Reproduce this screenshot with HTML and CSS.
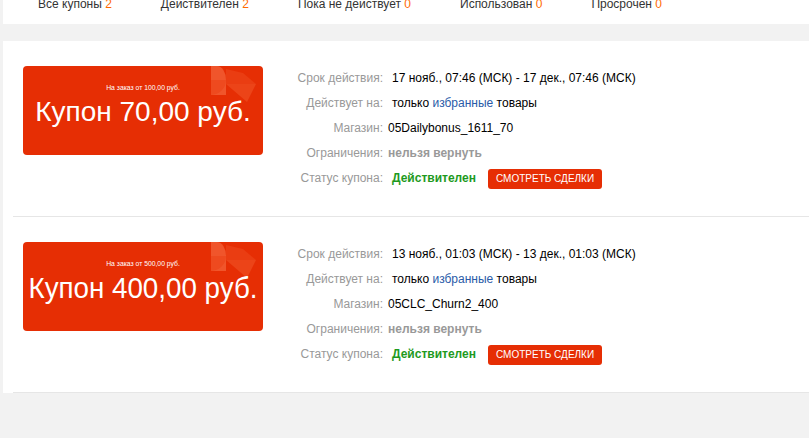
FILE: index.html
```html
<!DOCTYPE html>
<html lang="ru">
<head>
    <meta charset="UTF-8">
    <meta name="viewport" content="width=device-width, initial-scale=1.0">
    <title>Мои купоны</title>
    <link rel="stylesheet" href="styles.css">
</head>
<body>
    <div class="tabs">
        <a class="tab">Все купоны <span class="count">2</span></a>
        <a class="tab">Действителен <span class="count">2</span></a>
        <a class="tab">Пока не действует <span class="count">0</span></a>
        <a class="tab">Использован <span class="count">0</span></a>
        <a class="tab">Просрочен <span class="count">0</span></a>
    </div>

    <div class="coupon-list">
        <div class="coupon-item">
            <div class="coupon-card">
                <svg class="coupon-deco" width="50" height="44" viewBox="0 0 50 44">
                    <path d="M0 0 H6 A9 14 0 0 1 15 14 V29 H0 Z" fill="#f0552b"/>
                    <path d="M0 14 H15 A15 15 0 0 1 0 29 Z" fill="#ee4a1f"/>
                    <path d="M15 3 L32 7 L45 18 L15 18 Z" fill="#ea3d12"/>
                    <path d="M15 18 H45 L36 36 Z" fill="#ec4418"/>
                </svg>
                <div class="coupon-min">На заказ от 100,00 руб.</div>
                <div class="coupon-amount">Купон 70,00 руб.</div>
            </div>
            <div class="coupon-info">
                <span class="label">Срок действия:</span>
                <span class="value spaced">17 нояб., 07:46 (МСК) - 17 дек., 07:46 (МСК)</span>
                <span class="label">Действует на:</span>
                <span class="value spaced">только <a class="link">избранные</a> товары</span>
                <span class="label">Магазин:</span>
                <span class="value">05Dailybonus_1611_70</span>
                <span class="label">Ограничения:</span>
                <span class="value muted">нельзя вернуть</span>
                <span class="label">Статус купона:</span>
                <span class="value spaced"><b class="status">Действителен</b><button class="deals-btn">СМОТРЕТЬ СДЕЛКИ</button></span>
            </div>
        </div>

        <div class="coupon-item">
            <div class="coupon-card">
                <svg class="coupon-deco" width="50" height="44" viewBox="0 0 50 44">
                    <path d="M0 0 H6 A9 14 0 0 1 15 14 V29 H0 Z" fill="#f0552b"/>
                    <path d="M0 14 H15 A15 15 0 0 1 0 29 Z" fill="#ee4a1f"/>
                    <path d="M15 3 L32 7 L45 18 L15 18 Z" fill="#ea3d12"/>
                    <path d="M15 18 H45 L36 36 Z" fill="#ec4418"/>
                </svg>
                <div class="coupon-min">На заказ от 500,00 руб.</div>
                <div class="coupon-amount long">Купон 400,00 руб.</div>
            </div>
            <div class="coupon-info">
                <span class="label">Срок действия:</span>
                <span class="value spaced">13 нояб., 01:03 (МСК) - 13 дек., 01:03 (МСК)</span>
                <span class="label">Действует на:</span>
                <span class="value spaced">только <a class="link">избранные</a> товары</span>
                <span class="label">Магазин:</span>
                <span class="value">05CLC_Churn2_400</span>
                <span class="label">Ограничения:</span>
                <span class="value muted">нельзя вернуть</span>
                <span class="label">Статус купона:</span>
                <span class="value spaced"><b class="status">Действителен</b><button class="deals-btn">СМОТРЕТЬ СДЕЛКИ</button></span>
            </div>
        </div>
    </div>
</body>
</html>
```

FILE: styles.css
```css
* {
    margin: 0;
    padding: 0;
    box-sizing: border-box;
}

body {
    background: #f2f2f2;
    font-family: 'Liberation Sans', Arial, sans-serif;
    font-size: 12px;
    color: #333;
}

/* фильтр купонов */
.tabs {
    display: flex;
    gap: 49px;
    height: 24px;
    margin-left: 3px;
    padding-left: 35px;
    background: #fff;
    overflow: hidden;
}

.tabs .tab {
    margin-top: -3px;
    font-size: 12px;
    line-height: 14px;
    color: #333;
    cursor: pointer;
}

.tabs .count {
    color: #ff6a00;
}

/* список купонов */
.coupon-list {
    margin: 17px 0 0 3px;
    padding-left: 10px;
    background: #fff;
}

.coupon-item {
    display: flex;
    padding: 25px 0 25px 10px;
    border-bottom: 1px solid #e6e6e6;
}

.coupon-card {
    position: relative;
    flex: none;
    width: 240px;
    height: 89px;
    padding-top: 17px;
    border-radius: 4px;
    background: #e62e04;
    color: #fff;
    text-align: center;
    overflow: hidden;
}

.coupon-deco {
    position: absolute;
    top: 0;
    right: 2px;
}

.coupon-min {
    position: relative;
    font-size: 6.8px;
    line-height: 10px;
}

.coupon-amount {
    position: relative;
    margin-top: 2px;
    font-size: 28px;
    line-height: 34px;
    white-space: nowrap;
}

/* длинная сумма сжимается по ширине, чтобы влезть в купон */
.coupon-amount.long {
    margin-left: -10px;
    margin-right: -10px;
    font-size: 30px;
    transform: scaleX(0.925);
}

.coupon-info {
    display: grid;
    grid-template-columns: 100px auto;
    column-gap: 5px;
    align-content: start;
    margin-left: 20px;
    line-height: 25px;
}

.coupon-info .label {
    color: #999;
    text-align: right;
}

.coupon-info .value {
    color: #000;
}

.coupon-info .spaced {
    padding-left: 4px;
}

.coupon-info .muted {
    color: #999;
    font-weight: bold;
}

.coupon-info .link {
    color: #2a5ba8;
    cursor: pointer;
}

.coupon-info .status {
    color: #1e9a1e;
}

.deals-btn {
    height: 20px;
    margin-left: 12px;
    padding: 0 8px;
    border: none;
    border-radius: 3px;
    background: #e62e04;
    color: #fff;
    font-family: inherit;
    font-size: 10px;
    vertical-align: middle;
    cursor: pointer;
}
```
